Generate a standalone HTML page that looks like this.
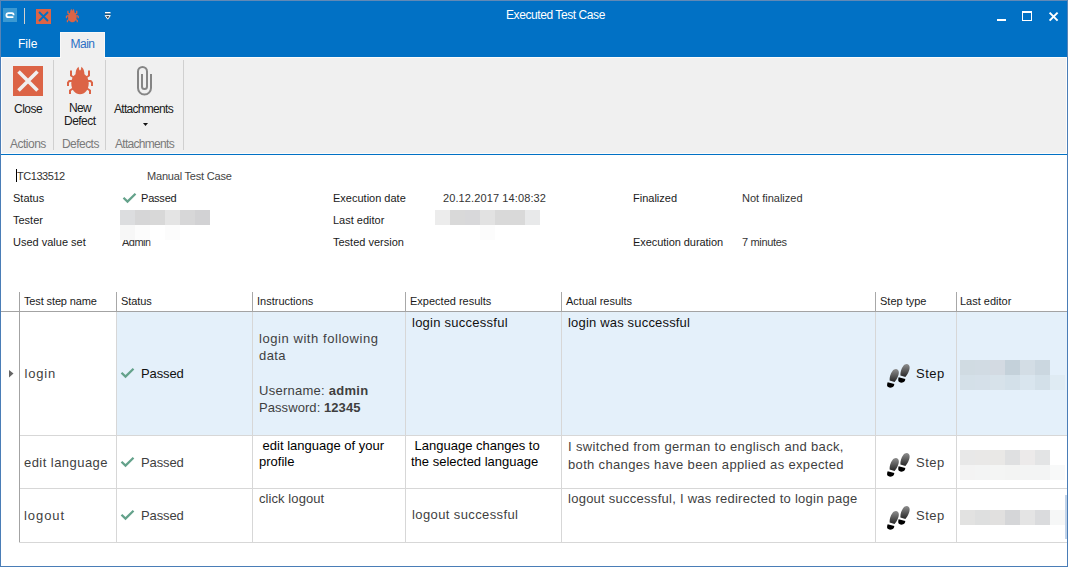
<!DOCTYPE html>
<html><head><meta charset="utf-8">
<style>
*{margin:0;padding:0;box-sizing:border-box}
html,body{width:1068px;height:567px;overflow:hidden;background:#fff}
body{position:relative;font-family:"Liberation Sans",sans-serif;color:#1a1a1a}
.a{position:absolute}
.t{position:absolute;white-space:pre;font-size:11px;line-height:11px}
.r{position:absolute;background:#d7d7d7}
.cal{position:absolute;white-space:pre;font-size:13px;line-height:13px;color:#3f3f3f}
.ari{position:absolute;white-space:pre;font-size:13px;line-height:15px;color:#000}
</style></head><body>
<!-- window border -->
<div class="a" style="left:0;top:0;width:1068px;height:567px;border:1px solid #4a7db7"></div>
<div class="a" style="left:0;top:0;width:1068px;height:1px;background:#6189b6"></div>
<div class="a" style="left:0;top:0;width:1px;height:57px;background:#5884b6"></div>
<div class="a" style="left:1067px;top:0;width:1px;height:57px;background:#5884b6"></div>
<!-- title bar -->
<div class="a" style="left:1px;top:1px;width:1066px;height:56px;background:#0171c5"></div>
<!-- app icon -->
<svg class="a" style="left:3px;top:8px" width="14" height="14" viewBox="0 0 14 14">
<rect width="14" height="14" fill="#3b99d2"/>
<path d="M10.6,7.3 C10.6,5.7 10.1,5.2 9,5.2 L5.6,5.2 C4.3,5.2 3.4,6 3.4,7.2 C3.4,8.4 4.3,9.2 5.6,9.2 L10.4,9.2" fill="none" stroke="#fff" stroke-width="1.8"/>
</svg>
<div class="a" style="left:24px;top:8px;width:1px;height:16px;background:#d3d0cc"></div>
<!-- QAT close -->
<svg class="a" style="left:36px;top:9px" width="15" height="15" viewBox="0 0 15 15">
<rect width="15" height="15" fill="#dc6446"/>
<path d="M3,3 L12,12 M12,3 L3,12" stroke="#0171c5" stroke-width="1.8"/>
</svg>
<!-- QAT bug -->
<svg class="a" style="left:64px;top:7.4px" width="16.7" height="16.7" viewBox="0 0 34 34">
<g fill="#dc6446"><path d="M17,10.2 C22.2,10.2 25.7,14.2 25.7,20.6 C25.7,27 21.8,31.3 17,31.3 C12.2,31.3 8.3,27 8.3,20.6 C8.3,14.2 11.8,10.2 17,10.2 Z"/>
<path d="M12.5,12.5 C12.5,8 13.4,5.2 15.5,3.7 L16.4,7.3 L17.6,7.3 L18.5,3.7 C20.6,5.2 21.5,8 21.5,12.5 Z"/></g>
<g fill="none" stroke="#dc6446" stroke-width="2.6">
<path d="M8,7.5 L8,12.5 L11,14.5 M26,7.5 L26,12.5 L23,14.5 M10,18 L6.3,18 L5,19.5 L5,23 M24,18 L27.7,18 L29,19.5 L29,23 M10,25.5 L7,27.5 L7,31 M24,25.5 L27,27.5 L27,31"/></g>
</svg>
<!-- QAT dropdown -->
<svg class="a" style="left:104px;top:11px" width="8" height="10" viewBox="0 0 8 10"><rect x="1" y="1" width="5.5" height="1.6" fill="#fff"/><rect x="1" y="2.6" width="5.5" height="0.8" fill="#333"/><path d="M1.2,4.6 L3.75,8.2 L6.3,4.6 Z" fill="#444" stroke="#fff" stroke-width="1"/></svg>
<!-- title -->
<div class="t" style="left:506px;top:9px;font-size:12px;line-height:12px;color:#fff;letter-spacing:-0.42px">Executed Test Case</div>
<!-- window buttons -->
<div class="a" style="left:997px;top:19px;width:9px;height:2px;background:#fff"></div>
<div class="a" style="left:1022px;top:11px;width:10px;height:10px;border:1px solid #fff;border-top-width:2px"></div>
<svg class="a" style="left:1048px;top:11px" width="11" height="11" viewBox="0 0 11 11"><path d="M1.6,1.6 L9.6,9.6 M9.6,1.6 L1.6,9.6" stroke="#fff" stroke-width="2"/></svg>
<!-- tabs -->
<div class="t" style="left:18px;top:38px;font-size:12px;line-height:12px;color:#fff">File</div>
<div class="a" style="left:60px;top:32px;width:45px;height:26px;background:#f0f0f0;border:1px solid #f8f8f8;border-bottom:none"></div>
<div class="t" style="left:70.5px;top:38px;font-size:12px;line-height:12px;color:#2b6fc4;letter-spacing:-0.5px">Main</div>
<!-- ribbon -->
<div class="a" style="left:1px;top:57px;width:1066px;height:97px;background:#f0f0f0;border:1px solid #fcfcfc"></div>
<div class="a" style="left:1px;top:154px;width:1066px;height:1px;background:#0171c5"></div>
<div class="a" style="left:61px;top:57px;width:43px;height:1px;background:#f0f0f0"></div>
<div class="a" style="left:53px;top:60px;width:1px;height:90px;background:#d0d0d0"></div>
<div class="a" style="left:105px;top:60px;width:1px;height:90px;background:#d0d0d0"></div>
<div class="a" style="left:183px;top:60px;width:1px;height:90px;background:#d0d0d0"></div>
<!-- close big -->
<svg class="a" style="left:13px;top:66px" width="30" height="30" viewBox="0 0 30 30">
<rect width="30" height="30" fill="#dc6446"/>
<path d="M5.5,5.5 L24.5,24.5 M24.5,5.5 L5.5,24.5" stroke="#f0f0f0" stroke-width="3.6"/>
</svg>
<div class="t" style="left:14px;top:103px;font-size:12px;line-height:12px;letter-spacing:-0.5px">Close</div>
<!-- bug big -->
<svg class="a" style="left:63px;top:63px" width="34" height="34" viewBox="0 0 34 34">
<g fill="#dc6446"><path d="M17,10.2 C22.2,10.2 25.7,14.2 25.7,20.6 C25.7,27 21.8,31.3 17,31.3 C12.2,31.3 8.3,27 8.3,20.6 C8.3,14.2 11.8,10.2 17,10.2 Z"/>
<path d="M12.5,12.5 C12.5,8 13.4,5.2 15.5,3.7 L16.4,7.3 L17.6,7.3 L18.5,3.7 C20.6,5.2 21.5,8 21.5,12.5 Z"/></g>
<g fill="none" stroke="#dc6446" stroke-width="2">
<path d="M8,7.5 L8,12.5 L11,14.5 M26,7.5 L26,12.5 L23,14.5 M10,18 L6.3,18 L5,19.5 L5,23 M24,18 L27.7,18 L29,19.5 L29,23 M10,25.5 L7,27.5 L7,31 M24,25.5 L27,27.5 L27,31"/></g>
</svg>
<div class="t" style="left:69px;top:102px;font-size:12px;line-height:12px;letter-spacing:-0.65px">New</div>
<div class="t" style="left:64px;top:115px;font-size:12px;line-height:12px;letter-spacing:-0.54px">Defect</div>
<!-- paperclip -->
<svg class="a" style="left:130px;top:62px" width="30" height="38" viewBox="0 0 30 38">
<path d="M21,12 L21,26 A6.5,6.5 0 0 1 8,26 L8,9.5 A4.5,4.5 0 0 1 17,9.5 L17,24.6 A2.5,2.5 0 0 1 12,24.6 L12,12" fill="none" stroke="#858585" stroke-width="2"/>
</svg>
<div class="t" style="left:114px;top:103px;font-size:12px;line-height:12px;letter-spacing:-0.7px">Attachments</div>
<svg class="a" style="left:143px;top:123px" width="5" height="3" viewBox="0 0 5 3"><path d="M0,0 L5,0 L2.5,3 Z" fill="#111"/></svg>
<div class="t" style="left:10px;top:138px;color:#7a7a7a;font-size:12px;line-height:12px;letter-spacing:-0.5px">Actions</div>
<div class="t" style="left:62px;top:138px;color:#7a7a7a;font-size:12px;line-height:12px;letter-spacing:-0.55px">Defects</div>
<div class="t" style="left:115px;top:138px;color:#7a7a7a;font-size:12px;line-height:12px;letter-spacing:-0.7px">Attachments</div>

<!-- info section -->
<div class="a" style="left:16px;top:169px;width:1px;height:13px;background:#000"></div>
<div class="t" style="left:17px;top:171px;color:#333;letter-spacing:-0.45px">TC133512</div>
<div class="t" style="left:147px;top:171px;color:#444;letter-spacing:-0.2px">Manual Test Case</div>
<div class="t" style="left:13px;top:193px">Status</div>
<div class="t" style="left:13px;top:215px">Tester</div>
<div class="t" style="left:13px;top:237px">Used value set</div>
<svg class="a" style="left:122px;top:192px" width="15" height="12" viewBox="0 0 15 12"><path d="M1.5,5.7 L5.5,9.6 L13.5,1.7" fill="none" stroke="#64a28b" stroke-width="2.3"/></svg>
<div class="t" style="left:141px;top:193px;letter-spacing:-0.2px">Passed</div>
<!-- blur tester -->
<div class="a" style="left:120px;top:210px;width:15px;height:15px;background:#dcdddf"></div>
<div class="a" style="left:135px;top:210px;width:15px;height:15px;background:#d6d6d7"></div>
<div class="a" style="left:150px;top:210px;width:15px;height:15px;background:#d8d8d8"></div>
<div class="a" style="left:165px;top:210px;width:15px;height:15px;background:#e4e4e4"></div>
<div class="a" style="left:180px;top:210px;width:15px;height:15px;background:#d7d7d8"></div>
<div class="a" style="left:195px;top:210px;width:15px;height:15px;background:#d2d2d4"></div>
<div class="a" style="left:120px;top:225px;width:15px;height:15px;background:#f7f7f7"></div>
<div class="a" style="left:135px;top:225px;width:15px;height:15px;background:#fcfcfc"></div>
<div class="a" style="left:165px;top:225px;width:15px;height:15px;background:#fcfcfc"></div>
<div class="t" style="left:122px;top:237px;color:#333;letter-spacing:-0.5px;clip-path:inset(3px 0 0 0)">Admin</div>

<div class="t" style="left:333px;top:193px">Execution date</div>
<div class="t" style="left:333px;top:215px">Last editor</div>
<div class="t" style="left:333px;top:237px">Tested version</div>
<div class="t" style="left:443px;top:193px;color:#333;letter-spacing:0.11px">20.12.2017 14:08:32</div>
<div class="a" style="left:435px;top:210px;width:15px;height:15px;background:#ececec"></div>
<div class="a" style="left:450px;top:210px;width:15px;height:15px;background:#d9d9d9"></div>
<div class="a" style="left:465px;top:210px;width:15px;height:15px;background:#d8d8da"></div>
<div class="a" style="left:480px;top:210px;width:15px;height:15px;background:#e2e2e2"></div>
<div class="a" style="left:495px;top:210px;width:30px;height:15px;background:#d9d9d9"></div>
<div class="a" style="left:525px;top:210px;width:15px;height:15px;background:#e8e9ea"></div>
<div class="a" style="left:480px;top:225px;width:15px;height:15px;background:#fcfcfc"></div>

<div class="t" style="left:633px;top:193px">Finalized</div>
<div class="t" style="left:633px;top:237px;letter-spacing:-0.06px">Execution duration</div>
<div class="t" style="left:742px;top:193px;color:#333">Not finalized</div>
<div class="t" style="left:742px;top:237px;color:#333;letter-spacing:-0.34px">7 minutes</div>

<!-- GRID -->

<!-- grid lines -->
<div class="a" style="left:19px;top:292px;width:1px;height:251px;background:#a3a3a3"></div>
<div class="a" style="left:1px;top:311px;width:1066px;height:1px;background:#a3a3a3"></div>
<div class="a" style="left:117px;top:312px;width:950px;height:123px;background:#e4f0fa"></div>
<div class="r" style="left:20px;top:435px;width:1047px;height:1px"></div>
<div class="r" style="left:20px;top:488px;width:1047px;height:1px"></div>
<div class="r" style="left:19px;top:542px;width:1048px;height:1px"></div>
<div class="a" style="left:116px;top:292px;width:1px;height:19px;background:#a8a8a8"></div>
<div class="r" style="left:116px;top:312px;width:1px;height:230px"></div>
<div class="a" style="left:252px;top:292px;width:1px;height:19px;background:#a8a8a8"></div>
<div class="r" style="left:252px;top:312px;width:1px;height:230px"></div>
<div class="a" style="left:405px;top:292px;width:1px;height:19px;background:#a8a8a8"></div>
<div class="r" style="left:405px;top:312px;width:1px;height:230px"></div>
<div class="a" style="left:561px;top:292px;width:1px;height:19px;background:#a8a8a8"></div>
<div class="r" style="left:561px;top:312px;width:1px;height:230px"></div>
<div class="a" style="left:875px;top:292px;width:1px;height:19px;background:#a8a8a8"></div>
<div class="r" style="left:875px;top:312px;width:1px;height:230px"></div>
<div class="a" style="left:956px;top:292px;width:1px;height:19px;background:#a8a8a8"></div>
<div class="r" style="left:956px;top:312px;width:1px;height:230px"></div>

<!-- header labels -->
<div class="t" style="left:24px;top:296px;letter-spacing:-0.13px">Test step name</div>
<div class="t" style="left:121px;top:296px;letter-spacing:-0.1px">Status</div>
<div class="t" style="left:257px;top:296px">Instructions</div>
<div class="t" style="left:410px;top:296px">Expected results</div>
<div class="t" style="left:566px;top:296px">Actual results</div>
<div class="t" style="left:880px;top:296px">Step type</div>
<div class="t" style="left:960px;top:296px">Last editor</div>
<!-- row indicator -->
<svg class="a" style="left:9px;top:370px" width="5" height="8" viewBox="0 0 5 8"><path d="M0,0 L4.5,3.5 L0,7.5 Z" fill="#666"/></svg>
<!-- row1 -->
<div class="cal" style="left:24.5px;top:367px;letter-spacing:0.8px">login</div>
<svg class="a" style="left:120px;top:367px" width="15" height="12" viewBox="0 0 15 12"><path d="M1.5,5.7 L5.5,9.6 L13.5,1.7" fill="none" stroke="#64a28b" stroke-width="2.3"/></svg>
<div class="cal" style="left:141px;top:367px;letter-spacing:-0.12px;color:#111">Passed</div>
<div class="cal" style="left:259px;top:332px;letter-spacing:0.56px">login with following</div>
<div class="cal" style="left:259px;top:349px;letter-spacing:0.43px">data</div>
<div class="cal" style="left:259px;top:384px;letter-spacing:0.26px">Username: <b>admin</b></div>
<div class="cal" style="left:259px;top:401px;letter-spacing:0.07px">Password: <b>12345</b></div>
<div class="cal" style="left:412px;top:316px;letter-spacing:0.25px;color:#111">login successful</div>
<div class="cal" style="left:568px;top:316px;letter-spacing:0.18px;color:#111">login was successful</div>
<div class="cal" style="left:916px;top:367px;letter-spacing:0.5px;color:#111">Step</div>
<!-- row2 -->
<div class="cal" style="left:24px;top:456px;letter-spacing:0.45px">edit language</div>
<svg class="a" style="left:120px;top:456px" width="15" height="12" viewBox="0 0 15 12"><path d="M1.5,5.7 L5.5,9.6 L13.5,1.7" fill="none" stroke="#64a28b" stroke-width="2.3"/></svg>
<div class="cal" style="left:141px;top:456px;letter-spacing:-0.12px">Passed</div>
<div class="ari" style="left:259px;top:438px"> edit language of your</div>
<div class="ari" style="left:259px;top:454px">profile</div>
<div class="ari" style="left:411px;top:438px"> Language changes to</div>
<div class="ari" style="left:411px;top:454px">the selected language</div>
<div class="cal" style="left:568px;top:440px;letter-spacing:0.34px">I switched from german to englisch and back,</div>
<div class="cal" style="left:568px;top:458px;letter-spacing:0.34px">both changes have been applied as expected</div>
<div class="cal" style="left:916px;top:456px;letter-spacing:0.5px">Step</div>
<!-- row3 -->
<div class="cal" style="left:24px;top:509px;letter-spacing:0.94px">logout</div>
<svg class="a" style="left:120px;top:509px" width="15" height="12" viewBox="0 0 15 12"><path d="M1.5,5.7 L5.5,9.6 L13.5,1.7" fill="none" stroke="#64a28b" stroke-width="2.3"/></svg>
<div class="cal" style="left:141px;top:509px;letter-spacing:-0.12px">Passed</div>
<div class="cal" style="left:259px;top:492px;letter-spacing:0.08px">click logout</div>
<div class="cal" style="left:412px;top:508px;letter-spacing:0.39px">logout successful</div>
<div class="cal" style="left:568px;top:492px;letter-spacing:0.26px">logout successful, I was redirected to login page</div>
<div class="cal" style="left:916px;top:509px;letter-spacing:0.5px">Step</div>
<div class="a" style="left:960px;top:360px;width:15px;height:15px;background:#d0dbe2"></div>
<div class="a" style="left:975px;top:360px;width:15px;height:15px;background:#d1dbe3"></div>
<div class="a" style="left:990px;top:360px;width:15px;height:15px;background:#d3dae2"></div>
<div class="a" style="left:1005px;top:360px;width:15px;height:15px;background:#c4d1da"></div>
<div class="a" style="left:1020px;top:360px;width:15px;height:15px;background:#d3dde5"></div>
<div class="a" style="left:1035px;top:360px;width:15px;height:15px;background:#cbd7e0"></div>
<div class="a" style="left:960px;top:375px;width:15px;height:15px;background:#d4e0e8"></div>
<div class="a" style="left:975px;top:375px;width:15px;height:15px;background:#d5e0e9"></div>
<div class="a" style="left:990px;top:375px;width:15px;height:15px;background:#d7e2ea"></div>
<div class="a" style="left:1005px;top:375px;width:15px;height:15px;background:#d3e0e9"></div>
<div class="a" style="left:1020px;top:375px;width:15px;height:15px;background:#d9e5ee"></div>
<div class="a" style="left:1035px;top:375px;width:15px;height:15px;background:#d3e0e9"></div>
<div class="a" style="left:1050px;top:375px;width:15px;height:15px;background:#dfebf3"></div>
<div class="a" style="left:960px;top:450px;width:15px;height:15px;background:#e8e8e8"></div>
<div class="a" style="left:975px;top:450px;width:15px;height:15px;background:#e9e8e7"></div>
<div class="a" style="left:990px;top:450px;width:15px;height:15px;background:#e9e8e6"></div>
<div class="a" style="left:1005px;top:450px;width:15px;height:15px;background:#dfe0e1"></div>
<div class="a" style="left:1020px;top:450px;width:15px;height:15px;background:#eceaea"></div>
<div class="a" style="left:1035px;top:450px;width:15px;height:15px;background:#e3e4e5"></div>
<div class="a" style="left:960px;top:465px;width:15px;height:15px;background:#f3f3f3"></div>
<div class="a" style="left:975px;top:465px;width:15px;height:15px;background:#f3f4f4"></div>
<div class="a" style="left:990px;top:465px;width:15px;height:15px;background:#f4f5f4"></div>
<div class="a" style="left:1005px;top:465px;width:15px;height:15px;background:#f3f4f3"></div>
<div class="a" style="left:1020px;top:465px;width:15px;height:15px;background:#f3f4f4"></div>
<div class="a" style="left:1035px;top:465px;width:15px;height:15px;background:#f3f4f4"></div>
<div class="a" style="left:1050px;top:465px;width:15px;height:15px;background:#f8f9f9"></div>
<div class="a" style="left:960px;top:510px;width:15px;height:15px;background:#e2e2e1"></div>
<div class="a" style="left:975px;top:510px;width:15px;height:15px;background:#dedfdf"></div>
<div class="a" style="left:990px;top:510px;width:15px;height:15px;background:#e1e0df"></div>
<div class="a" style="left:1005px;top:510px;width:15px;height:15px;background:#d5d6d8"></div>
<div class="a" style="left:1020px;top:510px;width:15px;height:15px;background:#e4e4e4"></div>
<div class="a" style="left:1035px;top:510px;width:15px;height:15px;background:#dadbdd"></div>
<div class="a" style="left:1050px;top:510px;width:15px;height:15px;background:#f6f7f7"></div>
<svg class="a" style="left:884px;top:361px" width="28" height="30" viewBox="0 0 28 30">
<defs><linearGradient id="fg1" x1="0" y1="0" x2="0" y2="1"><stop offset="0" stop-color="#8e8e8e"/><stop offset="1" stop-color="#262626"/></linearGradient></defs>
<path d="M5.6,19.6 C5.4,16 6.5,12.5 8.5,10 C10,8 12.5,7.4 14,9 C15.5,10.5 14.8,14 13.5,16.5 C12.8,18 11.5,20 10.6,21 Z" fill="url(#fg1)"/>
<path d="M3.7,21.2 L10.3,23 C10.2,24.5 9.5,26.2 7.5,26.6 C5.5,27 3.2,26 3.1,24.5 C3,23 3.3,22 3.7,21.2 Z" fill="#000"/>
<g transform="translate(10.8,-5)">
<path d="M5.6,19.6 C5.4,16 6.5,12.5 8.5,10 C10,8 12.5,7.4 14,9 C15.5,10.5 14.8,14 13.5,16.5 C12.8,18 11.5,20 10.6,21 Z" fill="url(#fg1)"/>
<path d="M3.9,21.2 L10.5,23 C10.4,24.5 9.7,26.2 7.7,26.6 C5.7,27 3.6,26 3.5,24.5 C3.4,23 3.5,22 3.9,21.2 Z" fill="#000"/>
</g>
</svg>
<svg class="a" style="left:884px;top:450px" width="28" height="30" viewBox="0 0 28 30">
<defs><linearGradient id="fg2" x1="0" y1="0" x2="0" y2="1"><stop offset="0" stop-color="#8e8e8e"/><stop offset="1" stop-color="#262626"/></linearGradient></defs>
<path d="M5.6,19.6 C5.4,16 6.5,12.5 8.5,10 C10,8 12.5,7.4 14,9 C15.5,10.5 14.8,14 13.5,16.5 C12.8,18 11.5,20 10.6,21 Z" fill="url(#fg2)"/>
<path d="M3.7,21.2 L10.3,23 C10.2,24.5 9.5,26.2 7.5,26.6 C5.5,27 3.2,26 3.1,24.5 C3,23 3.3,22 3.7,21.2 Z" fill="#000"/>
<g transform="translate(10.8,-5)">
<path d="M5.6,19.6 C5.4,16 6.5,12.5 8.5,10 C10,8 12.5,7.4 14,9 C15.5,10.5 14.8,14 13.5,16.5 C12.8,18 11.5,20 10.6,21 Z" fill="url(#fg2)"/>
<path d="M3.9,21.2 L10.5,23 C10.4,24.5 9.7,26.2 7.7,26.6 C5.7,27 3.6,26 3.5,24.5 C3.4,23 3.5,22 3.9,21.2 Z" fill="#000"/>
</g>
</svg>
<svg class="a" style="left:884px;top:503px" width="28" height="30" viewBox="0 0 28 30">
<defs><linearGradient id="fg3" x1="0" y1="0" x2="0" y2="1"><stop offset="0" stop-color="#8e8e8e"/><stop offset="1" stop-color="#262626"/></linearGradient></defs>
<path d="M5.6,19.6 C5.4,16 6.5,12.5 8.5,10 C10,8 12.5,7.4 14,9 C15.5,10.5 14.8,14 13.5,16.5 C12.8,18 11.5,20 10.6,21 Z" fill="url(#fg3)"/>
<path d="M3.7,21.2 L10.3,23 C10.2,24.5 9.5,26.2 7.5,26.6 C5.5,27 3.2,26 3.1,24.5 C3,23 3.3,22 3.7,21.2 Z" fill="#000"/>
<g transform="translate(10.8,-5)">
<path d="M5.6,19.6 C5.4,16 6.5,12.5 8.5,10 C10,8 12.5,7.4 14,9 C15.5,10.5 14.8,14 13.5,16.5 C12.8,18 11.5,20 10.6,21 Z" fill="url(#fg3)"/>
<path d="M3.9,21.2 L10.5,23 C10.4,24.5 9.7,26.2 7.7,26.6 C5.7,27 3.6,26 3.5,24.5 C3.4,23 3.5,22 3.9,21.2 Z" fill="#000"/>
</g>
</svg>
<!-- scrollbar fragment -->
<div class="a" style="left:1065px;top:495px;width:2px;height:44px;background:#c2d3e8"></div>

</body></html>
